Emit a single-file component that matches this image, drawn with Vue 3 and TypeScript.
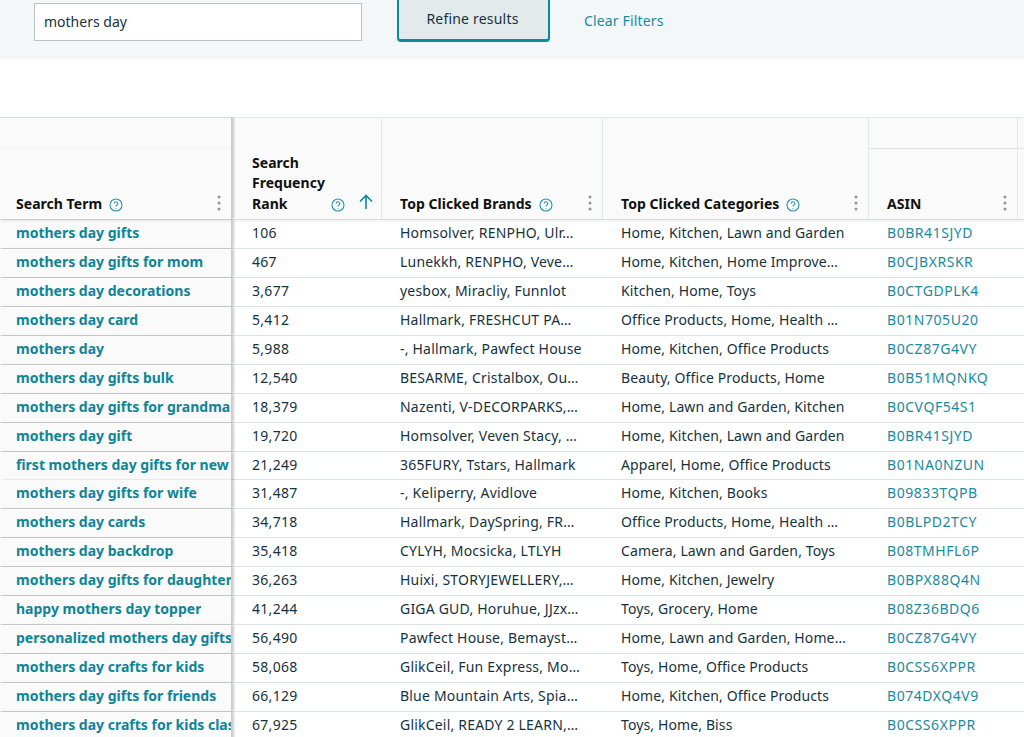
<script setup lang="ts">
interface Row { term: string; rank: string; brands: string; cats: string; asin: string }
const rows: Row[] = [
  { term: 'mothers day gifts', rank: '106', brands: 'Homsolver, RENPHO, Ulr…', cats: 'Home, Kitchen, Lawn and Garden', asin: 'B0BR41SJYD' },
  { term: 'mothers day gifts for mom', rank: '467', brands: 'Lunekkh, RENPHO, Veve…', cats: 'Home, Kitchen, Home Improve…', asin: 'B0CJBXRSKR' },
  { term: 'mothers day decorations', rank: '3,677', brands: 'yesbox, Miracliy, Funnlot', cats: 'Kitchen, Home, Toys', asin: 'B0CTGDPLK4' },
  { term: 'mothers day card', rank: '5,412', brands: 'Hallmark, FRESHCUT PA…', cats: 'Office Products, Home, Health …', asin: 'B01N705U20' },
  { term: 'mothers day', rank: '5,988', brands: '-, Hallmark, Pawfect House', cats: 'Home, Kitchen, Office Products', asin: 'B0CZ87G4VY' },
  { term: 'mothers day gifts bulk', rank: '12,540', brands: 'BESARME, Cristalbox, Ou…', cats: 'Beauty, Office Products, Home', asin: 'B0B51MQNKQ' },
  { term: 'mothers day gifts for grandma', rank: '18,379', brands: 'Nazenti, V-DECORPARKS,…', cats: 'Home, Lawn and Garden, Kitchen', asin: 'B0CVQF54S1' },
  { term: 'mothers day gift', rank: '19,720', brands: 'Homsolver, Veven Stacy, …', cats: 'Home, Kitchen, Lawn and Garden', asin: 'B0BR41SJYD' },
  { term: 'first mothers day gifts for new mom', rank: '21,249', brands: '365FURY, Tstars, Hallmark', cats: 'Apparel, Home, Office Products', asin: 'B01NA0NZUN' },
  { term: 'mothers day gifts for wife', rank: '31,487', brands: '-, Keliperry, Avidlove', cats: 'Home, Kitchen, Books', asin: 'B09833TQPB' },
  { term: 'mothers day cards', rank: '34,718', brands: 'Hallmark, DaySpring, FR…', cats: 'Office Products, Home, Health …', asin: 'B0BLPD2TCY' },
  { term: 'mothers day backdrop', rank: '35,418', brands: 'CYLYH, Mocsicka, LTLYH', cats: 'Camera, Lawn and Garden, Toys', asin: 'B08TMHFL6P' },
  { term: 'mothers day gifts for daughter', rank: '36,263', brands: 'Huixi, STORYJEWELLERY,…', cats: 'Home, Kitchen, Jewelry', asin: 'B0BPX88Q4N' },
  { term: 'happy mothers day topper', rank: '41,244', brands: 'GIGA GUD, Horuhue, JJzx…', cats: 'Toys, Grocery, Home', asin: 'B08Z36BDQ6' },
  { term: 'personalized mothers day gifts', rank: '56,490', brands: 'Pawfect House, Bemayst…', cats: 'Home, Lawn and Garden, Home…', asin: 'B0CZ87G4VY' },
  { term: 'mothers day crafts for kids', rank: '58,068', brands: 'GlikCeil, Fun Express, Mo…', cats: 'Toys, Home, Office Products', asin: 'B0CSS6XPPR' },
  { term: 'mothers day gifts for friends', rank: '66,129', brands: 'Blue Mountain Arts, Spia…', cats: 'Home, Kitchen, Office Products', asin: 'B074DXQ4V9' },
  { term: 'mothers day crafts for kids classroom', rank: '67,925', brands: 'GlikCeil, READY 2 LEARN,…', cats: 'Toys, Home, Biss', asin: 'B0CSS6XPPR' },
]
</script>

<template>
  <div class="page">
    <section class="filters">
      <div class="field">mothers day</div>
      <button class="refine" type="button">Refine results</button>
      <a class="clear">Clear Filters</a>
    </section>

    <section class="table">
      <div class="head">
        <div class="hcell sticky">
          <span class="band"></span>
          <div class="label">
            <span class="title">Search Term</span>
            <svg class="help" viewBox="0 0 14 14"><circle cx="7" cy="7" r="6" /><path d="M5.2 5.6a1.8 1.8 0 1 1 2.7 1.5c-.6.4-.9.7-.9 1.3" /><path d="M7 10.1v.6" /></svg>
            <svg class="dots" viewBox="0 0 4 16"><circle cx="2" cy="2" r="1.5" /><circle cx="2" cy="8" r="1.5" /><circle cx="2" cy="14" r="1.5" /></svg>
          </div>
        </div>
        <div class="hcell">
          <div class="label rank">
            <span class="title">Search<br />Frequency<br />Rank</span>
            <svg class="help" viewBox="0 0 14 14"><circle cx="7" cy="7" r="6" /><path d="M5.2 5.6a1.8 1.8 0 1 1 2.7 1.5c-.6.4-.9.7-.9 1.3" /><path d="M7 10.1v.6" /></svg>
            <svg class="arrow" viewBox="0 0 16 16"><path d="M8 15V1.5M2 7.5l6-6 6 6" /></svg>
          </div>
        </div>
        <div class="hcell">
          <div class="label">
            <span class="title">Top Clicked Brands</span>
            <svg class="help" viewBox="0 0 14 14"><circle cx="7" cy="7" r="6" /><path d="M5.2 5.6a1.8 1.8 0 1 1 2.7 1.5c-.6.4-.9.7-.9 1.3" /><path d="M7 10.1v.6" /></svg>
            <svg class="dots" viewBox="0 0 4 16"><circle cx="2" cy="2" r="1.5" /><circle cx="2" cy="8" r="1.5" /><circle cx="2" cy="14" r="1.5" /></svg>
          </div>
        </div>
        <div class="hcell">
          <div class="label">
            <span class="title">Top Clicked Categories</span>
            <svg class="help" viewBox="0 0 14 14"><circle cx="7" cy="7" r="6" /><path d="M5.2 5.6a1.8 1.8 0 1 1 2.7 1.5c-.6.4-.9.7-.9 1.3" /><path d="M7 10.1v.6" /></svg>
            <svg class="dots" viewBox="0 0 4 16"><circle cx="2" cy="2" r="1.5" /><circle cx="2" cy="8" r="1.5" /><circle cx="2" cy="14" r="1.5" /></svg>
          </div>
        </div>
        <div class="hcell grouped">
          <span class="band line"></span>
          <div class="label">
            <span class="title">ASIN</span>
            <svg class="dots" viewBox="0 0 4 16"><circle cx="2" cy="2" r="1.5" /><circle cx="2" cy="8" r="1.5" /><circle cx="2" cy="14" r="1.5" /></svg>
          </div>
        </div>
        <div class="hcell grouped last"><span class="band line"></span></div>
      </div>

      <div v-for="row in rows" :key="row.term" class="row">
        <div class="cell sticky term"><span class="clip">{{ row.term }}</span></div>
        <div class="cell num">{{ row.rank }}</div>
        <div class="cell brand">{{ row.brands }}</div>
        <div class="cell cat">{{ row.cats }}</div>
        <div class="cell asin">{{ row.asin }}</div>
        <div class="cell"></div>
      </div>
    </section>
  </div>
</template>

<style>
html, body { margin: 0; overflow: hidden; background: #fff; }
</style>

<style scoped>
.page {
  width: 1024px;
  height: 737px;
  overflow: hidden;
  font-family: "Noto Sans", "Open Sans", sans-serif;
  font-size: 14px;
  color: #16323c;
}
.filters {
  height: 59px;
  box-sizing: border-box;
  background: #f4f7f8;
  display: flex;
  align-items: flex-start;
  padding-left: 34px;
}
.field {
  width: 328px;
  height: 38px;
  margin-top: 3px;
  box-sizing: border-box;
  padding: 0 9px;
  line-height: 36px;
  background: #fff;
  border: 1px solid #b4c3c6;
}
.refine {
  width: 153px;
  height: 46px;
  margin: -4px 0 0 35px;
  padding: 0 2px 0 0;
  font: inherit;
  letter-spacing: 0.2px;
  color: #16323c;
  background: #e2eaec;
  border: 2px solid #0b8a9b;
  border-bottom-width: 3px;
  border-radius: 4px;
}
.clear {
  margin: 11px 0 0 34px;
  line-height: 20px;
  letter-spacing: 0.15px;
  color: #1a8a9e;
}
.table { margin-top: 58px; border-top: 1px solid #e6ebec; }
.head, .row {
  display: grid;
  grid-template-columns: 232px 150px 221px 266px 149px 6px;
}
.head {
  position: relative;
  z-index: 2;
  height: 102px;
  box-sizing: border-box;
  background: #fafafa;
  border-bottom: 1px solid #d5dbdc;
  box-shadow: 0 1px 3px rgba(0, 0, 0, 0.08);
}
.hcell {
  position: relative;
  display: flex;
  align-items: flex-end;
  box-sizing: border-box;
  border-right: 1px solid #e3e8e9;
  min-width: 0;
}
.sticky { box-shadow: 2px 0 2px rgba(0, 0, 0, 0.2); border-right: 1px solid #c8cdcf; z-index: 1; }
.band { position: absolute; left: 0; right: 0; top: 30px; border-top: 1px solid #f2f3f3; }
.band.line { border-top-color: #dfe5e6; }
.last { border-right: 0; }
.label {
  flex: 1;
  min-width: 0;
  height: 100%;
  box-sizing: border-box;
  display: flex;
  align-items: flex-end;
  padding: 0 10px 5px 18px;
}
.hcell.sticky .label { padding-left: 16px; }
.title { font-weight: 700; line-height: 20.5px; color: #0f1111; white-space: nowrap; letter-spacing: 0.03px; }
.help {
  width: 14px;
  height: 14px;
  margin: 0 0 2px 7px;
  fill: none;
  stroke: #2f93a5;
  stroke-width: 1.1;
  flex: none;
}
.dots { width: 4px; height: 16px; margin: 0 0 3px auto; fill: #8d9699; flex: none; }
.arrow { width: 16px; height: 16px; margin: 0 0 4px 13px; fill: none; stroke: #0b8a9b; stroke-width: 1.6; flex: none; }
.rank .help { margin-left: auto; }
.rank { padding: 0 7px 5px 20px; }
.row {
  height: 28.94px;
  box-sizing: border-box;
  border-bottom: 1px solid #dde3e4;
}
.cell {
  display: flex;
  align-items: center;
  box-sizing: border-box;
  padding: 0 0 2px 18px;
  min-width: 0;
  line-height: 26px;
  white-space: nowrap;
}
.term {
  padding: 0 0 2px 16px;
  background: #fafafa;
  font-weight: 700;
  color: #0e8595;
}
.clip { overflow: hidden; }
.num { padding-left: 20px; letter-spacing: 0.3px; }
.brand { letter-spacing: 0.2px; }
.cat { letter-spacing: 0.12px; }
.asin { color: #1a8a9e; letter-spacing: 0.55px; }
</style>
